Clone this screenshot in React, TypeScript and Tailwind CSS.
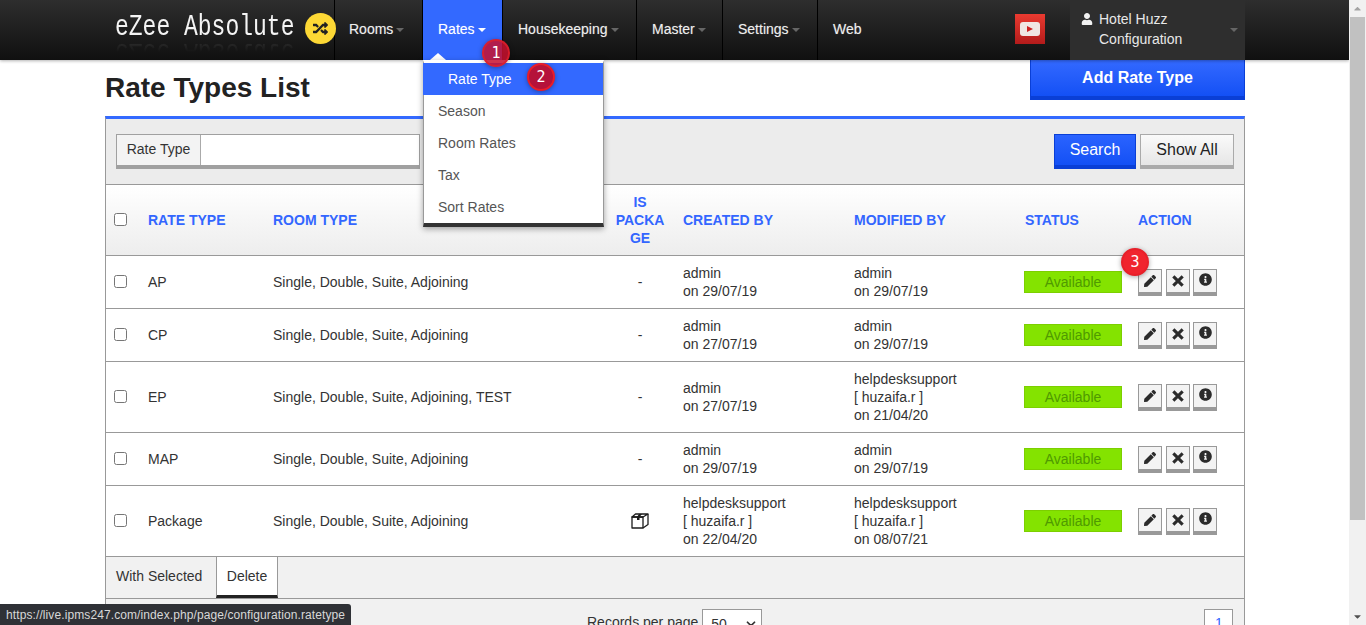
import React from "react";
import { FaRandom, FaPen, FaInfoCircle, FaUser, FaCaretDown, FaCaretUp } from "react-icons/fa";
import { ChevronDown } from "lucide-react";

const nav = [
  { label: "Rooms", w: "w-[88px] pl-[14px]", caret: true },
  { label: "Rates", w: "w-[80px] pl-[15px]", caret: true, active: true },
  { label: "Housekeeping", w: "w-[134px] pl-[15px]", caret: true },
  { label: "Master", w: "w-[86px] pl-[15px]", caret: true },
  { label: "Settings", w: "w-[95px] pl-[15px]", caret: true },
  { label: "Web", w: "w-[60px] pl-[15px]", caret: false },
];

const rows = [
  { h: "h-[53px]", code: "AP", room: "Single, Double, Suite, Adjoining", pkg: false, created: ["admin", "on 29/07/19"], modified: ["admin", "on 29/07/19"] },
  { h: "h-[53px]", code: "CP", room: "Single, Double, Suite, Adjoining", pkg: false, created: ["admin", "on 27/07/19"], modified: ["admin", "on 29/07/19"] },
  { h: "h-[71px]", code: "EP", room: "Single, Double, Suite, Adjoining, TEST", pkg: false, created: ["admin", "on 27/07/19"], modified: ["helpdesksupport", "[ huzaifa.r ]", "on 21/04/20"] },
  { h: "h-[53px]", code: "MAP", room: "Single, Double, Suite, Adjoining", pkg: false, created: ["admin", "on 29/07/19"], modified: ["admin", "on 29/07/19"] },
  { h: "h-[71px]", code: "Package", room: "Single, Double, Suite, Adjoining", pkg: true, created: ["helpdesksupport", "[ huzaifa.r ]", "on 22/04/20"], modified: ["helpdesksupport", "[ huzaifa.r ]", "on 08/07/21"] },
];

function ActionBtn({ children }: { children: React.ReactNode }) {
  return (
    <span className="flex h-[27px] w-[24px] items-center justify-center border border-b-4 border-[#999] bg-[#f3f3f3] text-[#2b2b2b]">
      {children}
    </span>
  );
}

function CloseIcon() {
  return (
    <svg width="14" height="14" viewBox="0 0 14 14" aria-hidden>
      <path d="M3 3 L11 11 M11 3 L3 11" stroke="#2b2b2b" strokeWidth="3.4" strokeLinecap="square" fill="none" transform="translate(7 7) scale(0.9) translate(-7 -7)" />
    </svg>
  );
}

function CubeIcon() {
  return (
    <svg width="18" height="16" viewBox="0 0 18 16" aria-hidden className="mx-auto block h-[16px] w-[18px]" fill="none" stroke="#1c1c1c" strokeWidth="1.3" strokeLinejoin="round">
      <path d="M1 4 L4.5 1 H17 L12 4 Z" />
      <path d="M1 4 H12 V15 H1 Z" />
      <path d="M12 15 L17 11.5 V1" />
      <path d="M6 4 H8.5 V7 H6 Z M8 1 H11 L8.5 4 H6 Z" fill="#1c1c1c" stroke="none" />
    </svg>
  );
}

function Badge({ n, className }: { n: number; className: string }) {
  return (
    <span
      className={
        "absolute z-30 flex h-[28px] w-[28px] items-center justify-center rounded-full border-2 text-[15px] text-white shadow-[0_1px_5px_rgba(0,0,0,0.35)] [font-family:'DejaVu_Sans_Mono',monospace] " +
        className
      }
    >
      {n}
    </span>
  );
}

function Th({ children, className = "" }: { children: React.ReactNode; className?: string }) {
  return (
    <th className={"border-b border-[#999] px-[10px] text-left align-middle text-[14px] font-bold uppercase text-[#3366ff] " + className}>
      {children}
    </th>
  );
}

export default function App() {
  return (
    <div className="flex h-[625px] w-[1366px] overflow-hidden bg-white text-[14px] text-[#333] [font-family:'Liberation_Sans',Arial,sans-serif]">
      <main className="relative h-[625px] w-[1349px] overflow-hidden">
        {/* top bar */}
        <header className="relative z-10 h-[60px] bg-gradient-to-b from-[#2e2e2e] to-[#101010] shadow-[0_1px_3px_rgba(0,0,0,0.3)]">
          <div className="ml-[105px] flex h-full w-[1140px]">
            <div className="relative flex w-[229px] items-start pl-[10px]">
              <span className="mt-[18px] block h-[26px] origin-bottom scale-y-[1.3] text-[23px] leading-[26px] text-[#f4f4f4] [font-family:'Liberation_Mono',monospace] [-webkit-box-reflect:below_-7px_linear-gradient(transparent_50%,rgba(255,255,255,0.16))]">
                eZee Absolute
              </span>
              <span className="absolute left-[200px] top-[13px] flex h-[31px] w-[31px] items-center justify-center rounded-full bg-[#fdd835] text-[#222]">
                <FaRandom size={15} />
              </span>
            </div>
            {nav.map((n) => (
              <div
                key={n.label}
                className={
                  "flex h-full items-center border-l border-black pb-[2px] text-[#eee] " +
                  n.w +
                  (n.active ? " bg-[#3369ff] text-white" : "")
                }
              >
                <span className="[text-shadow:0_0_1px_rgba(255,255,255,0.35)]">{n.label}</span>
                {n.caret && (
                  <span
                    className={
                      "ml-[3px] mt-[2px] h-0 w-0 border-x-[4px] border-t-[4px] border-x-transparent " +
                      (n.active ? "border-t-white" : "border-t-[#666]")
                    }
                  />
                )}
              </div>
            ))}
            <div className="flex flex-1 items-start justify-end">
              <div className="mr-[25px] mt-[14px] flex h-[30px] w-[30px] items-center justify-center bg-gradient-to-b from-[#ea3a30] to-[#b31b1b]">
                <span className="flex h-[14px] w-[20px] items-center justify-center rounded-[3px] bg-[#f0e6e2]">
                  <span className="h-0 w-0 border-y-[3px] border-l-[6px] border-y-transparent border-l-[#cc2020]" />
                </span>
              </div>
              <div className="relative flex h-[60px] w-[175px] bg-[#2e2e2e] pl-[11px] pt-[9px] text-[#e8e8e8]">
                <FaUser size={12} className="mt-[4px] shrink-0 text-[#f2f2f2]" />
                <div className="ml-[6px] leading-[20px]">
                  <div>Hotel Huzz</div>
                  <div>Configuration</div>
                </div>
                <span className="absolute right-[7px] top-[28px] h-0 w-0 border-x-[4px] border-t-[4px] border-x-transparent border-t-[#666]" />
              </div>
            </div>
          </div>
        </header>

        {/* page body */}
        <div className="ml-[105px] w-[1140px]">
          <div className="flex h-[56px] items-start justify-between">
            <h1 className="mt-[10px] text-[28px] font-bold leading-[35px] text-[#222]">Rate Types List</h1>
            <button className="h-[40px] w-[215px] border-x border-b-4 border-[#0a3fd6] bg-gradient-to-b from-[#3369ff] to-[#1350f5] text-[16px] font-bold text-white">
              Add Rate Type
            </button>
          </div>

          <section className="border-x border-t-[3px] border-x-[#999] border-t-[#3369ff]">
            {/* filter */}
            <div className="flex h-[66px] items-start justify-between border-b border-[#999] bg-[#ececec] px-[10px] pt-[15px]">
              <div className="flex h-[35px] w-[304px] border border-b-4 border-[#a0a0a0] bg-white">
                <span className="flex w-[84px] items-center justify-center border-r border-[#aaa] bg-[#f3f3f3] pb-[1px] text-[#333]">Rate Type</span>
                <span className="flex-1" />
              </div>
              <div className="flex gap-[4px]">
                <button className="h-[35px] w-[82px] border border-b-4 border-[#0a3fd6] bg-gradient-to-b from-[#2a63ff] to-[#1350f5] text-[16px] text-white">Search</button>
                <button className="h-[35px] w-[94px] border border-b-4 border-[#aaa] bg-gradient-to-b from-[#fafafa] to-[#e6e6e6] text-[16px] text-[#222]">Show All</button>
              </div>
            </div>

            {/* table */}
            <table className="w-[1138px] table-fixed border-separate border-spacing-0">
              <colgroup>
                <col className="w-[32px]" />
                <col className="w-[125px]" />
                <col className="w-[344px]" />
                <col className="w-[66px]" />
                <col className="w-[171px]" />
                <col className="w-[171px]" />
                <col className="w-[113px]" />
                <col className="w-[116px]" />
              </colgroup>
              <thead>
                <tr className="h-[71px] bg-gradient-to-b from-white to-[#ededed]">
                  <th className="border-b border-[#999] pl-[8px] text-left align-middle">
                    <input type="checkbox" className="mb-[2px] block h-[13px] w-[13px]" />
                  </th>
                  <Th>Rate Type</Th>
                  <Th>Room Type</Th>
                  <Th className="!px-0 !text-center leading-[18px]">
                    IS<br />PACKA<br />GE
                  </Th>
                  <Th>Created By</Th>
                  <Th>Modified By</Th>
                  <Th>Status</Th>
                  <Th>Action</Th>
                </tr>
              </thead>
              <tbody>
                {rows.map((r) => (
                  <tr key={r.code} className={r.h}>
                    <td className="border-b border-[#999] pl-[8px] align-middle">
                      <input type="checkbox" className="mb-[2px] block h-[13px] w-[13px]" />
                    </td>
                    <td className="border-b border-[#999] px-[10px]">{r.code}</td>
                    <td className="border-b border-[#999] px-[10px]">{r.room}</td>
                    <td className="border-b border-[#999] text-center">
                      {r.pkg ? <CubeIcon /> : "-"}
                    </td>
                    <td className="border-b border-[#999] px-[10px] leading-[18px]">
                      {r.created.map((l) => <div key={l}>{l}</div>)}
                    </td>
                    <td className="border-b border-[#999] px-[10px] leading-[18px]">
                      {r.modified.map((l) => <div key={l}>{l}</div>)}
                    </td>
                    <td className="border-b border-[#999] px-[10px]">
                      <div className="-ml-px flex h-[22px] w-[98px] items-center justify-center border border-[#7ccf00] bg-[#84e300] text-[#4f9a00]">Available</div>
                    </td>
                    <td className="border-b border-[#999] px-[10px]">
                      <div className="flex">
                        <ActionBtn><FaPen size={12} /></ActionBtn>
                        <span className="ml-[4px]"><ActionBtn><CloseIcon /></ActionBtn></span>
                        <span className="ml-[3px]"><ActionBtn><FaInfoCircle size={13} className="mb-[2px]" /></ActionBtn></span>
                      </div>
                    </td>
                  </tr>
                ))}
              </tbody>
            </table>

            {/* bulk actions */}
            <div className="flex h-[42px] border-b border-[#999] bg-[#f1f1f1]">
              <span className="flex w-[110px] items-center pb-[2px] pl-[10px]">With Selected</span>
              <span className="flex w-[62px] items-center justify-center border-x border-b-[3px] border-x-[#999] border-b-[#222] bg-white">Delete</span>
            </div>

            {/* pagination */}
            <div className="relative flex h-[60px] items-start bg-[#f1f1f1] pt-[10px]">
              <span className="ml-[481px] mt-[3px]">Records per page</span>
              <span className="ml-[4px] flex h-[32px] w-[60px] items-start justify-between border border-[#999] bg-white pl-[8px] pr-[3px] pt-[4px]">
                50
                <ChevronDown size={14} strokeWidth={3} className="mt-[3px] text-[#333]" />
              </span>
              <span className="ml-[442px] flex h-[32px] w-[29px] justify-center border border-[#999] bg-white pt-[3px] text-[#3366ff]">1</span>
            </div>
          </section>
        </div>

        {/* rates dropdown */}
        <span className="absolute left-[430px] top-[53px] z-20 h-0 w-0 border-x-[8px] border-b-[7px] border-x-transparent border-b-white" />
        <div className="absolute left-[423px] top-[60px] z-20 w-[181px] border-b-4 border-t-[3px] border-x border-x-[#999] border-b-[#333] border-t-white bg-white text-[#555] shadow-[0_2px_6px_rgba(0,0,0,0.35)]">
          <div className="-ml-px flex h-[32px] items-center bg-[#3369ff] pl-[25px] text-white">Rate Type</div>
          {["Season", "Room Rates", "Tax", "Sort Rates"].map((t) => (
            <div key={t} className="-ml-px flex h-[32px] items-center pl-[15px]">{t}</div>
          ))}
        </div>

        {/* annotations */}
        <Badge n={1} className="left-[482px] top-[39px] border-[#e0202a]/80 bg-[#c8102e]/85" />
        <Badge n={2} className="left-[527px] top-[63px] border-[#ea1c28] bg-[#b5123a]" />
        <Badge n={3} className="left-[1121px] top-[248px] border-[#e8202a] bg-[#f0242e]" />

        {/* browser status bubble */}
        <div className="absolute bottom-0 left-0 z-30 flex h-[21px] w-[351px] items-center rounded-tr-[3px] bg-[#2f3136] pl-[6px] text-[12px] tracking-[0.1px] text-[#d8d8d8]">
          https://live.ipms247.com/index.php/page/configuration.ratetype
        </div>
      </main>

      {/* scrollbar */}
      <aside className="flex h-[625px] w-[17px] flex-col items-center bg-[#f1f1f1]">
        <span className="flex h-[17px] items-center"><FaCaretUp size={11} className="text-[#a3a3a3]" /></span>
        <span className="h-[503px] w-[15px] bg-[#c1c1c1]" />
        <span className="mt-auto flex h-[17px] items-center"><FaCaretDown size={11} className="text-[#505050]" /></span>
      </aside>
    </div>
  );
}
